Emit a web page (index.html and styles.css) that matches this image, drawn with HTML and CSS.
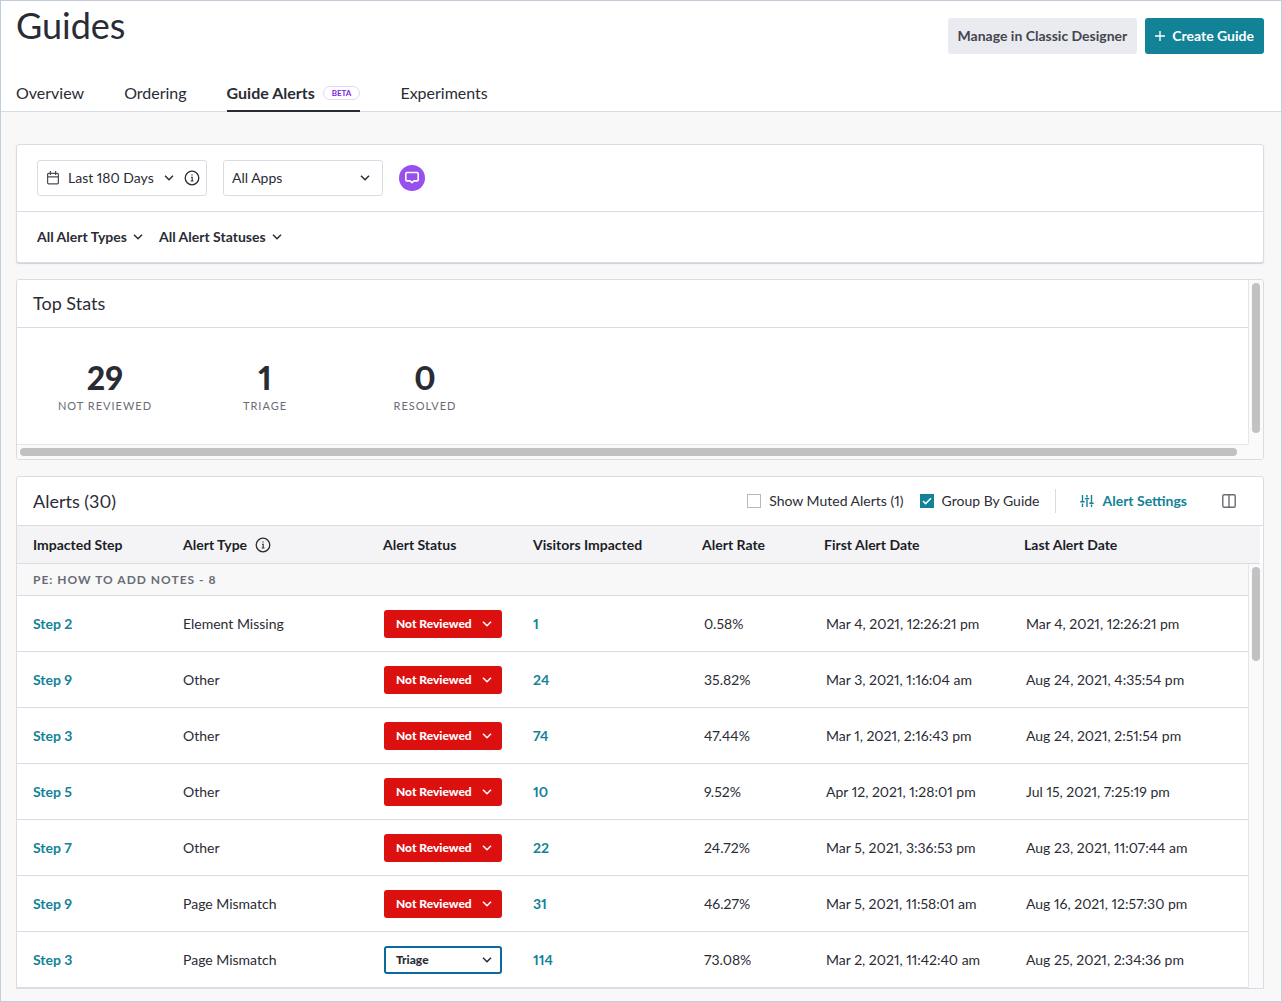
FILE: index.html
```html
<!DOCTYPE html>
<html lang="en">
<head>
    <meta charset="UTF-8">
    <meta name="viewport" content="width=device-width, initial-scale=1.0">
    <title>Guides</title>
    <link rel="stylesheet" href="styles.css">
</head>
<body>

<header class="page-header">
    <div class="header-top">
        <h1 class="title">Guides</h1>
        <div class="header-actions">
            <button class="btn btn-secondary">Manage in Classic Designer</button>
            <button class="btn btn-primary">
                <svg width="10" height="10" viewBox="0 0 10 10" fill="none" stroke="currentColor" stroke-width="1.4"><path d="M5 0v10M0 5h10"/></svg>
                Create Guide
            </button>
        </div>
    </div>
    <nav class="tabs">
        <a class="tab" href="#">Overview</a>
        <a class="tab" href="#">Ordering</a>
        <a class="tab active" href="#">Guide Alerts <span class="beta">BETA</span></a>
        <a class="tab" href="#">Experiments</a>
    </nav>
</header>

<main class="content">
    <section class="panel filters">
        <div class="filter-row">
            <div class="date-range">
                <svg width="12" height="14" viewBox="0 0 12 14" fill="none" stroke="#4a4c55" stroke-width="1.2"><rect x=".6" y="2.4" width="10.8" height="10.4" rx="1"/><path d="M.6 5.8h10.8M3.4 0v4M8.6 0v4"/></svg>
                <select class="range-select" aria-label="Date range"><option>Last 180 Days</option></select>
                <svg class="info" width="16" height="16" viewBox="0 0 16 16" fill="none" stroke="#2a2c35" stroke-width="1.3"><circle cx="8" cy="8" r="6.8"/><path d="M7 7.300h1.200V11M6.700 11h2.800" stroke-width="1.100"/><circle cx="8" cy="5" r=".4" stroke-width=".6"/></svg>
            </div>
            <select class="app-select" aria-label="Apps"><option>All Apps</option></select>
            <button class="chat-btn" aria-label="Guide help">
                <svg width="16" height="14" viewBox="0 0 16 14" fill="none" stroke="#fff" stroke-width="1.6" stroke-linejoin="round"><path d="M3 1.500h10q1.200 0 1.200 1.200v6q0 1.200-1.200 1.200h-3L8 11.600 6 9.900H3q-1.200 0-1.200-1.200v-6Q1.800 1.500 3 1.500z"/></svg>
            </button>
        </div>
        <div class="filter-row filter-links">
            <select class="link-select" aria-label="Alert types"><option>All Alert Types</option></select>
            <select class="link-select" aria-label="Alert statuses"><option>All Alert Statuses</option></select>
        </div>
    </section>

    <section class="panel stats-panel">
        <div class="stats-view">
            <h2 class="panel-title">Top Stats</h2>
            <div class="stats">
                <div class="stat"><strong>29</strong><span>NOT REVIEWED</span></div>
                <div class="stat"><strong>1</strong><span>TRIAGE</span></div>
                <div class="stat"><strong>0</strong><span>RESOLVED</span></div>
            </div>
        </div>
        <div class="track track-y"><div class="thumb"></div></div>
        <div class="track track-x"><div class="thumb"></div></div>
        <div class="track-corner"></div>
    </section>

    <section class="panel alerts-panel">
        <div class="alerts-bar">
            <h2 class="alerts-title">Alerts (30)</h2>
            <label class="check"><input type="checkbox"> Show Muted Alerts (1)</label>
            <label class="check"><input type="checkbox" checked> Group By Guide</label>
            <div class="bar-right">
                <button class="settings-btn">
                    <svg width="14" height="14" viewBox="0 0 14 14" fill="none" stroke="currentColor" stroke-width="1.4"><path d="M2.500 1v6.500M2.500 9.500V13M7 1v2.500M7 5.500V13M11.500 1v7.500M11.500 10.500V13M.3 7.800h4.400M4.800 4.600h4.400M9.300 9.200h4.400"/></svg>
                    Alert Settings
                </button>
                <button class="columns-btn" aria-label="Columns">
                    <svg width="14" height="14" viewBox="0 0 14 14" fill="none" stroke="currentColor" stroke-width="1.4"><rect x=".8" y=".8" width="12.400" height="12.400" rx="1.200"/><path d="M7 1v12"/></svg>
                </button>
            </div>
        </div>
        <div class="table-wrap">
            <table>
                <colgroup>
                    <col class="c-step"><col class="c-type"><col class="c-status"><col class="c-visitors"><col class="c-rate"><col class="c-first"><col>
                </colgroup>
                <thead>
                    <tr>
                        <th>Impacted Step</th>
                        <th><span class="th-info">Alert Type
                            <svg class="info" width="16" height="16" viewBox="0 0 16 16" fill="none" stroke="#2a2c35" stroke-width="1.3"><circle cx="8" cy="8" r="6.800"/><path d="M7 7.300h1.200V11M6.700 11h2.800" stroke-width="1.100"/><circle cx="8" cy="5" r=".4" stroke-width=".6"/></svg></span>
                        </th>
                        <th>Alert Status</th>
                        <th>Visitors Impacted</th>
                        <th>Alert Rate</th>
                        <th>First Alert Date</th>
                        <th>Last Alert Date</th>
                    </tr>
                </thead>
                <tbody>
                    <tr class="group"><td colspan="7">PE: HOW TO ADD NOTES - 8</td></tr>
                    <tr>
                        <td><a href="#">Step 2</a></td>
                        <td>Element Missing</td>
                        <td><select class="status" aria-label="Status"><option>Not Reviewed</option></select></td>
                        <td><a href="#">1</a></td>
                        <td class="num">0.58%</td>
                        <td class="num">Mar 4, 2021, 12:26:21 pm</td>
                        <td class="num">Mar 4, 2021, 12:26:21 pm</td>
                    </tr>
                    <tr>
                        <td><a href="#">Step 9</a></td>
                        <td>Other</td>
                        <td><select class="status" aria-label="Status"><option>Not Reviewed</option></select></td>
                        <td><a href="#">24</a></td>
                        <td class="num">35.82%</td>
                        <td class="num">Mar 3, 2021, 1:16:04 am</td>
                        <td class="num">Aug 24, 2021, 4:35:54 pm</td>
                    </tr>
                    <tr>
                        <td><a href="#">Step 3</a></td>
                        <td>Other</td>
                        <td><select class="status" aria-label="Status"><option>Not Reviewed</option></select></td>
                        <td><a href="#">74</a></td>
                        <td class="num">47.44%</td>
                        <td class="num">Mar 1, 2021, 2:16:43 pm</td>
                        <td class="num">Aug 24, 2021, 2:51:54 pm</td>
                    </tr>
                    <tr>
                        <td><a href="#">Step 5</a></td>
                        <td>Other</td>
                        <td><select class="status" aria-label="Status"><option>Not Reviewed</option></select></td>
                        <td><a href="#">10</a></td>
                        <td class="num">9.52%</td>
                        <td class="num">Apr 12, 2021, 1:28:01 pm</td>
                        <td class="num">Jul 15, 2021, 7:25:19 pm</td>
                    </tr>
                    <tr>
                        <td><a href="#">Step 7</a></td>
                        <td>Other</td>
                        <td><select class="status" aria-label="Status"><option>Not Reviewed</option></select></td>
                        <td><a href="#">22</a></td>
                        <td class="num">24.72%</td>
                        <td class="num">Mar 5, 2021, 3:36:53 pm</td>
                        <td class="num">Aug 23, 2021, 11:07:44 am</td>
                    </tr>
                    <tr>
                        <td><a href="#">Step 9</a></td>
                        <td>Page Mismatch</td>
                        <td><select class="status" aria-label="Status"><option>Not Reviewed</option></select></td>
                        <td><a href="#">31</a></td>
                        <td class="num">46.27%</td>
                        <td class="num">Mar 5, 2021, 11:58:01 am</td>
                        <td class="num">Aug 16, 2021, 12:57:30 pm</td>
                    </tr>
                    <tr>
                        <td><a href="#">Step 3</a></td>
                        <td>Page Mismatch</td>
                        <td><select class="status triage" aria-label="Status"><option>Triage</option></select></td>
                        <td><a href="#">114</a></td>
                        <td class="num">73.08%</td>
                        <td class="num">Mar 2, 2021, 11:42:40 am</td>
                        <td class="num">Aug 25, 2021, 2:34:36 pm</td>
                    </tr>
                </tbody>
            </table>
            <div class="table-side">
                <div class="side-head"></div>
                <div class="track track-y"><div class="thumb"></div></div>
            </div>
        </div>
    </section>
</main>

</body>
</html>
```
FILE: styles.css
```css
* {
    box-sizing: border-box;
}
body {
    margin: 0;
    min-height: 100vh;
    border: 1px solid #c1cdd8;
    background: #f8f8f8;
    font-family: Lato, "Liberation Sans", sans-serif;
    font-size: 14px;
    font-variant-numeric: proportional-nums;
    line-height: 20px;
    color: #2a2c35;
}
button, select, input {
    font: inherit;
    color: inherit;
    margin: 0;
}
button {
    border: none;
    padding: 0;
    background: none;
    cursor: pointer;
}
select {
    appearance: none;
    border: none;
    padding: 0;
    background: url("data:image/svg+xml,%3Csvg xmlns='http://www.w3.org/2000/svg' width='10' height='6' fill='none' stroke='%232a2c35' stroke-width='1.5'%3E%3Cpath d='M1 .8l4 4 4-4'/%3E%3C/svg%3E") no-repeat right center;
    cursor: pointer;
}
svg {
    display: block;
    flex: none;
}

/* header */
.page-header {
    background: #fff;
    border-bottom: 1px solid #dadce5;
    padding: 0 17px 0 15px;
}
.header-top {
    display: flex;
    justify-content: space-between;
    height: 75px;
}
.title {
    margin: 2px 0 0;
    font-size: 36px;
    line-height: 44px;
    font-weight: 400;
}
.header-actions {
    display: flex;
    gap: 8px;
    padding-top: 17px;
}
.btn {
    display: flex;
    align-items: center;
    justify-content: center;
    height: 36px;
    border-radius: 3px;
    font-weight: 700;
}
.btn-secondary {
    padding: 0 10px;
    background: #eaebf0;
    color: #44464f;
}
.btn-primary {
    gap: 7px;
    padding: 0 10px;
    background: #128297;
    color: #fff;
}
.tabs {
    display: flex;
    gap: 40px;
}
.tab {
    display: flex;
    align-items: center;
    gap: 8px;
    height: 36px;
    margin-bottom: -1px;
    border-bottom: 2px solid transparent;
    font-size: 16px;
    color: #2a2c35;
    text-decoration: none;
}
.tab.active {
    font-weight: 700;
    border-color: #2a2c35;
}
.beta {
    padding: 0 8px;
    border: 1px solid #e6d5fb;
    border-radius: 7px;
    font-size: 8px;
    line-height: 12px;
    color: #7a26e0;
}

/* panels */
.content {
    display: flex;
    flex-direction: column;
    gap: 16px;
    padding: 32px 17px 12px 15px;
}
.panel {
    background: #fff;
    border: 1px solid #dadce5;
    border-radius: 3px;
}
.filters {
    box-shadow: 0 1px 1px #cfd1da;
}
.filter-row {
    display: flex;
    align-items: center;
    gap: 16px;
    height: 66px;
    padding: 0 20px;
}
.filter-links {
    height: 51px;
    border-top: 1px solid #dadce5;
}
.date-range {
    display: flex;
    align-items: center;
    height: 36px;
    padding: 0 6px 0 9px;
    border: 1px solid #dadce5;
    border-radius: 3px;
}
.range-select {
    width: 106px;
    margin: 0 10px 0 9px;
}
.app-select {
    width: 160px;
    height: 36px;
    padding: 0 8px;
    border: 1px solid #dadce5;
    border-radius: 3px;
    background-position: right 12px center;
}
.chat-btn {
    display: grid;
    place-items: center;
    width: 26px;
    height: 26px;
    border-radius: 50%;
    background: #9750ee;
}
.link-select {
    padding-right: 15px;
    font-weight: 700;
}

/* top stats */
.stats-panel {
    display: grid;
    grid-template-columns: 1fr 15px;
    grid-template-rows: auto 15px;
    overflow: hidden;
}
.panel-title {
    margin: 0;
    padding: 11px 16px 12px;
    border-bottom: 1px solid #dadce5;
    font-size: 18px;
    line-height: 24px;
    font-weight: 400;
}
.stats {
    display: flex;
    padding: 34px 8px 29px;
}
.stat {
    width: 160px;
    text-align: center;
}
.stat strong {
    display: block;
    font-size: 32px;
    line-height: 32px;
    font-weight: 900;
}
.stat span {
    display: block;
    padding-top: 3px;
    font-size: 11px;
    line-height: 18px;
    letter-spacing: 1px;
    color: #6a6c75;
}
.track {
    background: #fafafa;
}
.track-y {
    padding: 3px;
    border-left: 1px solid #e6e6ea;
}
.track-x {
    padding: 3px;
    border-top: 1px solid #e6e6ea;
}
.track-corner {
    background: #fafafa;
}
.thumb {
    border-radius: 4px;
    background: #c1c1c1;
}
.track-y .thumb {
    width: 8px;
    height: 150px;
}
.track-x .thumb {
    height: 8px;
    margin-right: 8px;
}

/* alerts */
.alerts-panel {
    border-radius: 3px 3px 0 0;
}
.alerts-bar {
    display: flex;
    align-items: center;
    gap: 16px;
    height: 49px;
    padding: 0 27px 0 16px;
    border-bottom: 1px solid #dadce5;
}
.alerts-title {
    margin: 0 auto 0 0;
    font-size: 18px;
    line-height: 24px;
    font-weight: 400;
}
.check {
    display: flex;
    align-items: center;
    gap: 8px;
}
.check input {
    appearance: none;
    width: 14px;
    height: 14px;
    border: 1px solid #b5b7c3;
    background: #fff;
}
.check input:checked {
    border-color: #128297;
    background: #128297 url("data:image/svg+xml,%3Csvg xmlns='http://www.w3.org/2000/svg' width='10' height='8' fill='none' stroke='white' stroke-width='1.5'%3E%3Cpath d='M1 4l2.600 2.600L9 1.200'/%3E%3C/svg%3E") no-repeat center;
}
.bar-right {
    display: flex;
    align-items: center;
    gap: 35px;
    height: 24px;
    padding-left: 24px;
    border-left: 1px solid #dadce5;
}
.settings-btn {
    display: flex;
    align-items: center;
    gap: 8px;
    font-weight: 700;
    color: #128297;
}
.columns-btn {
    color: #6a6c75;
}
.table-wrap {
    display: grid;
    grid-template-columns: 1fr 15px;
}
table {
    width: 100%;
    table-layout: fixed;
    border-collapse: separate;
    border-spacing: 0;
}
.c-step, .c-status {
    width: 150px;
}
.c-type, .c-first {
    width: 200px;
}
.c-visitors {
    width: 169px;
}
.c-rate {
    width: 122px;
}
th, td {
    padding: 0 0 0 16px;
    border-bottom: 1px solid #dadce5;
    text-align: left;
    white-space: nowrap;
}
th {
    height: 38px;
    background: #f4f4f7;
    font-weight: 700;
    color: #1c1e27;
}
.th-info {
    display: flex;
    align-items: center;
    gap: 8px;
}
td {
    height: 56px;
}
td.num {
    padding-left: 18px;
}
td a {
    font-weight: 700;
    color: #128297;
    text-decoration: none;
}
.group td {
    height: 32px;
    background: #f8f8f8;
    font-size: 12px;
    font-weight: 700;
    letter-spacing: 1px;
    color: #6a6c75;
}
.status {
    display: block;
    width: 118px;
    height: 28px;
    margin-left: 1px;
    padding: 0 12px;
    border-radius: 3px;
    background-color: #dd1010;
    background-image: url("data:image/svg+xml,%3Csvg xmlns='http://www.w3.org/2000/svg' width='10' height='6' fill='none' stroke='white' stroke-width='1.5'%3E%3Cpath d='M1 .8l4 4 4-4'/%3E%3C/svg%3E");
    background-position: right 10px center;
    font-size: 12px;
    font-weight: 900;
    color: #fff;
}
.status.triage {
    padding: 0 10px;
    border: 2px solid #0a6a9c;
    background-color: #fff;
    background-image: url("data:image/svg+xml,%3Csvg xmlns='http://www.w3.org/2000/svg' width='10' height='6' fill='none' stroke='%232a2c35' stroke-width='1.5'%3E%3Cpath d='M1 .8l4 4 4-4'/%3E%3C/svg%3E");
    background-position: right 8px center;
    color: #2a2c35;
}
.table-side {
    display: flex;
    flex-direction: column;
}
.side-head {
    height: 38px;
    margin-right: 3px;
    background: #f4f4f7;
    border-bottom: 1px solid #dadce5;
}
.table-side .track {
    flex: 1;
}
.table-side .thumb {
    height: 94px;
}
```
